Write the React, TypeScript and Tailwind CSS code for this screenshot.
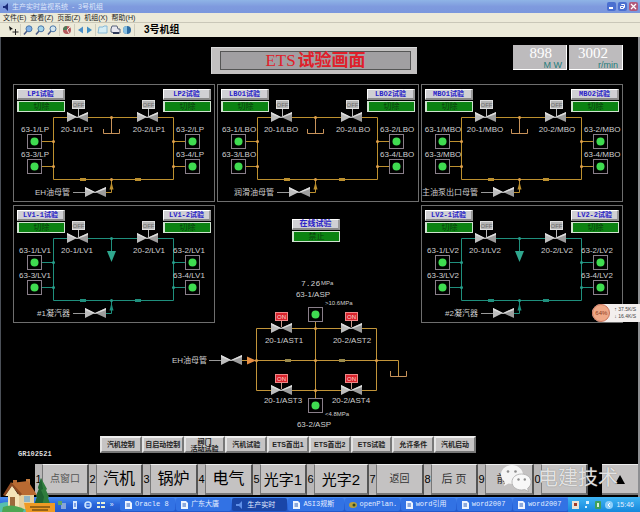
import React from "react";

type PanelSpec = {
  tag: string;
  valve: string;
  left: string;
  right: string;
  source: string;
  vacuum?: boolean;
};

const panels: PanelSpec[] = [
  { tag: "LP", valve: "LP1", left: "LP1", right: "LP2", source: "EH油母管" },
  { tag: "LBO", valve: "LBO", left: "LBO1", right: "LBO2", source: "润滑油母管" },
  { tag: "MBO", valve: "MBO", left: "MBO1", right: "MBO2", source: "主油泵出口母管" },
  { tag: "LV1", valve: "LV1", left: "LV1-1", right: "LV1-2", source: "#1凝汽器", vacuum: true },
  { tag: "LV2", valve: "LV2", left: "LV2-1", right: "LV2-2", source: "#2凝汽器", vacuum: true },
];

const menus = ["文件(E)", "查看(Z)", "页面(Z)", "机组(X)", "帮助(H)"];

const screens = ["汽机控制", "自启动控制", "阀门\n活动试验", "汽机试验", "ETS首出1", "ETS首出2", "ETS试验", "允许条件", "汽机启动"];

const windows = [
  { no: "1", text: "点窗口", look: "text-[10px] text-[#555]" },
  { no: "2", text: "汽机", look: "text-[16px]" },
  { no: "3", text: "锅炉", look: "text-[16px]" },
  { no: "4", text: "电气", look: "text-[16px]" },
  { no: "5", text: "光字1", look: "text-[15px]" },
  { no: "6", text: "光字2", look: "text-[15px]" },
  { no: "7", text: "返回", look: "text-[10px] text-[#333]" },
  { no: "8", text: "后 页", look: "text-[11px] text-[#333]" },
  { no: "9", text: "前 页", look: "text-[11px] text-[#333]" },
  { no: "0", text: "", look: "text-[11px]" },
];

const tasks = [
  { text: "Oracle 8", kind: "doc" },
  { text: "广东大唐", kind: "doc" },
  { text: "生产实时", kind: "app", active: true },
  { text: "ASI3规斯", kind: "doc" },
  { text: "openPlan.", kind: "plan" },
  { text: "word引用", kind: "doc" },
  { text: "word2007", kind: "doc" },
  { text: "word2007", kind: "doc" },
];

function Valve({ x, y }: { x: number; y: number }) {
  return (
    <g>
      <rect x={x - 10} y={y - 1} width="20" height="2" fill="#000" />
      <path d={`M${x - 10} ${y - 5}L${x} ${y}L${x - 10} ${y + 5}Z`} fill="#bdbdbd" />
      <path d={`M${x + 11} ${y - 5}L${x} ${y}L${x + 11} ${y + 5}Z`} fill="#9c9c9c" />
      <path d={`M${x - 10} ${y - 5}L${x} ${y}L${x + 11} ${y - 5}L${x + 11} ${y - 3}L${x} ${y + 1}L${x - 10} ${y - 3}Z`} fill="#dcdcdc" />
    </g>
  );
}

function Solenoid({ x, y, on }: { x: number; y: number; on?: boolean }) {
  return (
    <g>
      <path d={`M${x + 0.5} ${y - 9}V${y}`} stroke={on ? "#c99a8c" : "#bbb"} />
      <rect x={x - 5.5} y={y - 16.5} width="12" height="8" fill={on ? "#d8232c" : "#b4b4b4"} stroke={on ? "#e88" : "#dedede"} strokeWidth="1" />
      <text x={x + 0.5} y={y - 10} fontSize="6" textAnchor="middle" fill={on ? "#ffd9d9" : "#6b6b6b"}>
        {on ? "ON" : "OFF"}
      </text>
    </g>
  );
}

function Lamp({ x, y }: { x: number; y: number }) {
  return (
    <g>
      <rect x={x - 6.5} y={y - 6.5} width="14" height="14" fill="#000" stroke="#8a7f8a" />
      <circle cx={x + 0.5} cy={y + 0.5} r="4" fill="#3fdc50" />
    </g>
  );
}

function Joint({ x, y, fill }: { x: number; y: number; fill: string }) {
  return <circle cx={x + 0.5} cy={y + 0.5} r="1.5" fill={fill} />;
}

function TestControl({ title, state, big }: { title: string; state: string; big?: boolean }) {
  return (
    <div className="flex w-12 flex-col gap-px">
      <button
        className={
          "flex h-[11px] items-center justify-center whitespace-nowrap border-t border-l border-r-2 border-b-2 border-t-white border-l-white border-r-[#999] border-b-[#888] bg-[#d0d0d4] font-['Liberation_Mono','Noto_Sans_CJK_SC',monospace] leading-none font-bold text-[#2a22c8] " +
          (big ? "text-[8px]" : "text-[7px]")
        }
      >
        {title}
      </button>
      <button className="flex h-[11px] items-center justify-center border-t border-l-2 border-r border-b border-[#cfe3cf] bg-[#0b8212] text-[8px] leading-none text-[#0a3d0d]">
        {state}
      </button>
    </div>
  );
}

function Panel({ spec }: { spec: PanelSpec }) {
  const pipe = spec.vacuum ? "#1f8f7d" : "#bd902f";
  const node = spec.vacuum ? "#27a08c" : "#e0a04a";
  const rightLabel = spec.vacuum ? 160 : 163;
  return (
    <section className="grid h-[118px] outline outline-1 -outline-offset-1 outline-[#6e6e6e]">
      <svg viewBox="0 0 202 118" className="col-start-1 row-start-1 h-[118px] w-full" fill="none">
        <path d="M40.5 33.5H160.5V95.5H40.5Z" stroke={pipe} />
        <path d="M28 57.5H40M28 82.5H40M161 57.5H172M161 82.5H172" stroke={pipe} />
        <path d="M60 108.5H98.5V95" stroke={pipe} />
        <path d="M60 108.5H72" stroke="#999" />
        <path d="M96.5 105.5L98.5 98L100.5 105.5Z" fill={pipe} />
        <rect x="67" y="94" width="6" height="3" fill={pipe} />
        <rect x="122" y="94" width="6" height="3" fill={pipe} />
        {spec.vacuum ? (
          <g>
            <path d="M98.5 34V47" stroke={pipe} />
            <path d="M94 46H103L98.5 57Z" fill="#2fa78e" />
          </g>
        ) : (
          <path d="M98.5 34V49.5M90.5 45V49.5H106.5V45" stroke="#c8935a" />
        )}
        <Joint x={98} y={33} fill={node} />
        <Joint x={98} y={95} fill={node} />
        <Joint x={40} y={57} fill={node} />
        <Joint x={40} y={82} fill={node} />
        <Joint x={160} y={57} fill={node} />
        <Joint x={160} y={82} fill={node} />
        <Solenoid x={65} y={33} />
        <Solenoid x={135} y={33} />
        <Valve x={64} y={33} />
        <Valve x={134} y={33} />
        <Valve x={82} y={108} />
        <Lamp x={21} y={57} />
        <Lamp x={21} y={82} />
        <Lamp x={179} y={57} />
        <Lamp x={179} y={82} />
        <g fill="#cfcfcf" fontSize="8">
          <text x="22" y="48" textAnchor="middle">{`63-1/${spec.tag}`}</text>
          <text x="22" y="73" textAnchor="middle">{`63-3/${spec.tag}`}</text>
          <text x={rightLabel} y="48">{`63-2/${spec.tag}`}</text>
          <text x={rightLabel} y="73">{`63-4/${spec.tag}`}</text>
          <text x="64" y="48" textAnchor="middle">{`20-1/${spec.valve}`}</text>
          <text x="136" y="48" textAnchor="middle">{`20-2/${spec.valve}`}</text>
          <text x="57" y="111" textAnchor="end">{spec.source}</text>
        </g>
      </svg>
      <div className="col-start-1 row-start-1 flex items-start justify-between self-start px-1 pt-[5px]">
        <TestControl title={`${spec.left}试验`} state="切除" />
        <TestControl title={`${spec.right}试验`} state="切除" />
      </div>
    </section>
  );
}

function TripBlock() {
  return (
    <svg viewBox="170 275 299 155" className="pointer-events-none mx-auto -mt-12 h-[155px] w-[299px]" fill="none">
      <path d="M256.5 328.5H376.5V390.5H256.5ZM242 360.5H398.5V374.5M315.5 321V399" stroke="#c2953a" />
      <path d="M390.5 371V376.5H406.5V371M398.5 374V376.5" stroke="#c8935a" />
      <path d="M209 360.5H222" stroke="#999" />
      <path d="M247 356.5L256 360.5L247 364.5Z" fill="#e58f45" />
      <rect x="285" y="359" width="6" height="3" fill="#9a8a4c" />
      <rect x="339" y="359" width="6" height="3" fill="#9a8a4c" />
      <Joint x={256} y={360} fill="#e0a04a" />
      <Joint x={315} y={328} fill="#e0a04a" />
      <Joint x={315} y={360} fill="#e0a04a" />
      <Joint x={315} y={390} fill="#e0a04a" />
      <Joint x={376} y={360} fill="#e0a04a" />
      <Solenoid x={281} y={329} on />
      <Solenoid x={351} y={329} on />
      <Solenoid x={281} y={391} on />
      <Solenoid x={351} y={391} on />
      <Valve x={281} y={328} />
      <Valve x={351} y={328} />
      <Valve x={281} y={390} />
      <Valve x={351} y={390} />
      <Valve x={231} y={360} />
      <Lamp x={315} y={314} />
      <Lamp x={315} y={405} />
      <g fill="#cfcfcf" fontSize="8">
        <text x="172" y="363">EH油母管</text>
        <text x="284" y="343" textAnchor="middle">20-1/AST1</text>
        <text x="352" y="343" textAnchor="middle">20-2/AST2</text>
        <text x="283" y="403" textAnchor="middle">20-1/AST3</text>
        <text x="351" y="403" textAnchor="middle">20-2/AST4</text>
        <text x="313" y="297" textAnchor="middle">63-1/ASP</text>
        <text x="314" y="427" textAnchor="middle">63-2/ASP</text>
        <text x="301" y="286" fontFamily="Liberation Mono, monospace">7.26</text>
        <text x="321" y="285" fontSize="6">MPa</text>
        <text x="325" y="305" fontSize="6">&gt;10.6MPa</text>
        <text x="325" y="416" fontSize="6">&lt;4.8MPa</text>
      </g>
    </svg>
  );
}

function ToolButton({ label, slim, children }: { label: string; slim?: boolean; children: React.ReactNode }) {
  return (
    <button aria-label={label} className={"flex h-3 shrink-0 items-center justify-center " + (slim ? "w-[9px]" : "w-3")}>
      <svg viewBox="0 0 12 12" className="h-3 w-3 shrink-0" fill="none">
        {children}
      </svg>
    </button>
  );
}

function Lens({ tone }: { tone: string }) {
  return (
    <g>
      <path d="M5 7L2 10.5" stroke="#4c5c86" strokeWidth="1.6" />
      <circle cx="7" cy="4.8" r="3" fill={tone} stroke="#4a76a8" />
    </g>
  );
}

function Divider() {
  return <span className="mx-px h-3 w-px bg-[#cfcdbd]" />;
}

function TaskIcon({ kind }: { kind: string }) {
  return (
    <svg viewBox="0 0 8 8" className="h-2 w-2 shrink-0">
      {kind === "doc" && (
        <g>
          <path d="M1 0H6L8 2V8H1Z" fill="#eef4ff" />
          <path d="M2.5 3H6M2.5 5H6" stroke="#2c5fb8" />
        </g>
      )}
      {kind === "app" && <path d="M0 3H3L6 0V8L3 5H0Z" fill="#5f8fe8" />}
      {kind === "plan" && (
        <g>
          <ellipse cx="4" cy="4" rx="4" ry="3" fill="#b8a13c" />
          <circle cx="5" cy="4" r="1.5" fill="#344a1f" />
        </g>
      )}
    </svg>
  );
}

function House() {
  return (
    <svg viewBox="0 0 56 34" className="absolute bottom-0 left-0 h-[34px] w-14" aria-hidden="true">
      <ellipse cx="10" cy="32" rx="18" ry="8" fill="#57bfae" />
      <path d="M41 0L47 11L46 12L49 19L48 20L51 28H34L37 19L36 18L39 11L38 10Z" fill="#2f7d3c" />
      <path d="M41 0L43 11L41 12L44 19L42 28H34L37 19L36 18L39 11L38 10Z" fill="#1f6230" />
      <rect x="13" y="2" width="4" height="7" fill="#b56a35" />
      <rect x="26" y="1" width="4" height="6" fill="#c47a3d" />
      <path d="M8 16H34V31H8Z" fill="#e6cf9d" />
      <path d="M5 18L12 7L19 18V31H8V18Z" fill="#f4e3b8" />
      <path d="M11 5L28 3L37 17H21Z" fill="#b96a32" />
      <path d="M11 4L3 17L5 18L12 8L20 18L22 16Z" fill="#8e4a22" />
      <rect x="10" y="19" width="5" height="9" fill="#9c6a3c" />
      <rect x="24" y="18" width="6" height="6" fill="#8fb3c4" />
      <path d="M24 25H55V34H26Z" fill="#ef9a24" />
      <path d="M30 29H50M32 32H48" stroke="#7c5210" strokeWidth="1.5" />
      <path d="M3 29Q12 25 24 31L23 34H2Z" fill="#4da652" />
    </svg>
  );
}

function ChatBubbles() {
  return (
    <svg viewBox="0 0 32 28" className="h-7 w-8" aria-hidden="true">
      <path d="M12 1C5.500 1 1 5.500 1 10.500C1 13.500 2.500 16 5 18L4 22L8.500 19.500C9.700 19.800 11 20 12 20C18 20 23 16 23 10.500C23 5.500 18 1 12 1Z" fill="#f4f4f4" />
      <path d="M21.500 10C16 10 12 13.500 12 18C12 22.500 16 26 21.500 26C22.500 26 23.600 25.800 24.600 25.500L28.500 27.500L27.600 24.300C29.800 22.800 31 20.600 31 18C31 13.500 27 10 21.500 10Z" fill="#f8f8f8" stroke="#a9a9a9" strokeWidth="0.8" />
      <circle cx="8" cy="7.500" r="1.300" fill="#8c8c8c" />
      <circle cx="15.500" cy="7.500" r="1.300" fill="#8c8c8c" />
      <circle cx="18.500" cy="15.500" r="1.200" fill="#8c8c8c" />
      <circle cx="24.800" cy="15.500" r="1.200" fill="#8c8c8c" />
    </svg>
  );
}

function Readout({ value, unit }: { value: string; unit: string }) {
  return (
    <div className="flex h-[25px] w-[54px] flex-col border-r border-b border-white bg-[#bdbbbd] pr-1">
      <span className="pr-2.5 font-['Liberation_Serif',serif] text-[15px] leading-[16px] text-white">{value}</span>
      <span className="text-[9px] leading-[8px] text-[#1d7b7b]">{unit}</span>
    </div>
  );
}

export default function App() {
  return (
    <div className="relative flex min-h-screen flex-col overflow-hidden bg-black font-['Liberation_Sans','Noto_Sans_CJK_SC',sans-serif] leading-none">
      <header className="flex h-[13px] items-center gap-0.5 bg-linear-to-b from-[#8fb4e6] via-[#7f9ade] to-[#7a97dd] px-0.5">
        <svg viewBox="0 0 8 8" className="h-2 w-2">
          <path d="M1 3H3L6 0V8L3 5H1Z" fill="#1a2c7a" />
        </svg>
        <h1 className="flex-1 text-[7px] whitespace-pre text-[#dfe8fb]">生产实时监视系统  -  3号机组</h1>
        <button aria-label="最小化" className="flex h-[9px] w-[9px] items-end rounded-xs bg-[#4a6fd0] p-0.5">
          <span className="h-0.5 w-1 bg-white" />
        </button>
        <button aria-label="还原" className="flex h-[9px] w-[9px] items-center justify-center rounded-xs bg-[#4a6fd0]">
          <svg viewBox="0 0 7 7" className="h-[7px] w-[7px]" fill="none" stroke="#fff">
            <path d="M2.500 2V1.500H5.500V4.500H5M1.500 3.500H4.500V5.500H1.500Z" />
          </svg>
        </button>
        <button aria-label="关闭" className="flex h-[9px] w-[9px] items-center justify-center rounded-xs bg-[#b0587c]">
          <svg viewBox="0 0 7 7" className="h-[7px] w-[7px]" stroke="#fff" strokeWidth="1.3">
            <path d="M1 1L6 6M6 1L1 6" />
          </svg>
        </button>
      </header>

      <nav className="flex h-[10px] items-center gap-1 border-b border-[#c9c7b8] bg-[#ecead9] px-[3px] text-[7px] text-[#222]">
        {menus.map((m) => (
          <button key={m} className="whitespace-nowrap">{m}</button>
        ))}
      </nav>

      <div className="flex h-[14px] items-center bg-[#ecead9] pl-[7px]">
        <ToolButton label="选择">
          <path d="M2 2L6 5L4 5.500L3 7Z" fill="#111" />
          <path d="M8.500 5V11M5.500 8H11.500" stroke="#222" />
        </ToolButton>
        <Divider />
        <ToolButton label="放大"><Lens tone="#7fb0e8" /></ToolButton>
        <ToolButton label="缩小"><Lens tone="#a5d6ea" /></ToolButton>
        <ToolButton label="还原比例"><Lens tone="#d5e6ee" /></ToolButton>
        <Divider />
        <ToolButton label="时钟">
          <circle cx="6" cy="6" r="4" fill="#b5595c" />
          <path d="M6 2A4 4 0 0 0 2 6L6 6Z" fill="#4d7a56" />
          <path d="M6 6L9 3M6 6L8 9" stroke="#f3e3e0" />
        </ToolButton>
        <Divider />
        <ToolButton label="后退" slim><path d="M8 2.500V9.500L3 6Z" fill="#4b8fc9" /></ToolButton>
        <ToolButton label="前进" slim><path d="M3 2.500V9.500L8 6Z" fill="#3f8fc4" /></ToolButton>
        <Divider />
        <ToolButton label="打开"><path d="M2 3H6L7 2H10V9H1Z" fill="#d5edf5" stroke="#86b8d6" /></ToolButton>
        <ToolButton label="打印">
          <path d="M3 2H8L9 5H11V9H6L2 8V5Z" fill="#e6e6ee" stroke="#57627c" />
          <path d="M4 9H10" stroke="#2f3a58" strokeWidth="2" />
        </ToolButton>
        <ToolButton label="帮助">
          <circle cx="6" cy="6" r="4" fill="#2c6aa0" />
          <path d="M6 2A4 4 0 0 0 6 10Z" fill="#86bfe0" />
        </ToolButton>
        <Divider />
        <strong className="ml-2 text-[10px] text-black">3号机组</strong>
      </div>

      <main className="relative flex-1 border-r-2 border-l border-r-[#8d8f92] border-l-[#4b5058] pt-2">
        <div className="flex items-start pr-[15px] pl-1">
          <div className="flex-1" />
          <div className="mt-0.5 h-[27px] w-[206px] border-t border-l border-[#d8d8d8] bg-[#c2c0c0] pt-[3px] pr-[6px] pb-1 pl-2">
            <h2 className="flex h-[19px] items-center justify-center gap-0.5 border border-[#555] bg-[#a19fa2] font-['Liberation_Serif','Noto_Sans_CJK_SC',serif] text-[17px] leading-none whitespace-nowrap text-[#e0202a]">
              ETS<b>试验画面</b>
            </h2>
          </div>
          <div className="flex flex-1 justify-end gap-0.5 text-right">
            <Readout value="898" unit="M W" />
            <Readout value="3002" unit="r/min" />
          </div>
        </div>

        <div className="grid grid-cols-3 gap-x-0.5 gap-y-[3px] pt-2.5 pr-[15px] pl-3">
          {panels.slice(0, 4).map((p) => (
            <Panel key={p.tag} spec={p} />
          ))}
          <div className="flex justify-center pt-[14px] pr-1">
            <TestControl title="在线试验" state="禁止" big />
          </div>
          <Panel spec={panels[4]} />
        </div>

        <TripBlock />

        <div className="flex h-7 items-start pt-1.5">
          <span className="w-[99px] self-end pl-[17px] font-['Liberation_Mono',monospace] text-[7px] font-bold text-[#ddd]">GR102521</span>
          <div className="grid w-[376px] grid-cols-9">
            {screens.map((s) => (
              <button
                key={s}
                className="flex h-[17px] items-center justify-center border-2 border-t-[#eee] border-r-[#777] border-b-[#777] border-l-[#e4e4e4] bg-[#c6c4c4] text-center text-[7px] leading-[7px] font-bold whitespace-pre text-[#222]"
              >
                {s}
              </button>
            ))}
          </div>
        </div>

        <div className="relative mt-1.5 mb-0.5 grid h-[31px] grid-cols-[54fr_54fr_55fr_55fr_54fr_62fr_55fr_54fr_56fr_54fr_14fr_36fr] pl-[34px]">
          {windows.map((w) => (
            <button key={w.no} className="flex text-black">
              <span className="flex h-full w-[7px] items-center justify-center bg-[#b9b7b7] text-[11px]">{w.no}</span>
              <span
                className={
                  "flex h-full flex-1 items-center justify-center border-t border-r-2 border-b-2 border-l border-t-[#eee] border-r-[#555] border-b-[#777] border-l-[#777] bg-[#c4c2c2] whitespace-nowrap " +
                  w.look
                }
              >
                {w.text}
              </span>
            </button>
          ))}
          <span />
          <button aria-label="上移" className="flex items-center justify-center border-t border-b-2 border-t-[#eee] border-b-[#777] bg-[#c4c2c2]">
            <svg viewBox="0 0 10 9" className="h-[9px] w-2.5">
              <path d="M5 0L10 9H0Z" fill="#000" />
            </svg>
          </button>
          <div className="pointer-events-none absolute top-0 right-5 flex items-center gap-1.5">
            <ChatBubbles />
            <span className="text-[20px] leading-[28px] text-white/80 [text-shadow:0_0_1px_#666]">电建技术</span>
          </div>
        </div>

        <aside className="absolute top-[267px] -right-0.5 flex h-[18px] items-center gap-1 rounded-l-full bg-[#f3efee] pr-1">
          <span className="flex h-[18px] w-[18px] items-center justify-center rounded-full border border-[#c9735a] bg-[#f0a988] text-[6px] text-[#8a3a22]">64%</span>
          <span className="flex flex-col gap-0.5 text-[5px] text-[#444]">
            <span>↑ 37.5K/S</span>
            <span>↓ 16.4K/S</span>
          </span>
        </aside>
      </main>

      <footer className="flex h-[15px] items-center bg-linear-to-b from-[#4a8df0] via-[#2a66dc] to-[#2358c8] pl-14 text-[7px] text-[#e4eeff]">
        <div className="flex w-16 items-center justify-around pr-1">
          <svg viewBox="0 0 8 8" className="h-2 w-2"><path d="M0 0H4V4H0Z" fill="#5ea36a" /><path d="M4 2H8V8H3V4H4Z" fill="#86a5d8" /></svg>
          <svg viewBox="0 0 8 8" className="h-2 w-2"><path d="M2 0H6V8H2Z" fill="#d9e8ff" /><path d="M3 3H5M3 5H5" stroke="#2358c8" /></svg>
          <svg viewBox="0 0 8 8" className="h-2 w-2"><circle cx="4" cy="4" r="3" fill="none" stroke="#cfe6ff" strokeWidth="1.5" /><path d="M1 4H7" stroke="#cfe6ff" /></svg>
          <svg viewBox="0 0 8 8" className="h-2 w-2"><path d="M0 1H3V3H0ZM4 1H8V3H4ZM0 5H3V7H0ZM4 5H8V7H4Z" fill="#e8f0d8" /></svg>
          <span>»</span>
        </div>
        <div className="grid flex-1 grid-cols-8 gap-px">
          {tasks.map((t, i) => (
            <button
              key={i}
              className={
                "flex h-[13px] items-center gap-[3px] overflow-hidden rounded-xs pl-1 whitespace-nowrap " +
                (t.active ? "bg-[#1a46a8]" : "bg-[#3272e4]")
              }
            >
              <TaskIcon kind={t.kind} />
              <span className={t.kind === "app" ? "" : "font-['Liberation_Mono','Noto_Sans_CJK_SC',monospace]"}>{t.text}</span>
            </button>
          ))}
        </div>
        <div className="flex h-full w-[72px] items-center justify-between bg-linear-to-b from-[#3fb4f4] to-[#1488dc] pr-1.5 pl-1">
          <svg viewBox="0 0 8 8" className="h-2 w-2"><rect width="7" height="8" fill="#e9e4d8" /><path d="M2 2H5V5H2Z" fill="#a23b2a" /></svg>
          <svg viewBox="0 0 8 8" className="h-2 w-2"><path d="M3 0H6V3H3ZM2 5H4V7H2Z" fill="#d8f0ff" /></svg>
          <svg viewBox="0 0 8 8" className="h-2 w-2"><rect x="1" width="6" height="8" rx="1" fill="#3fa05a" /><path d="M3 2H5V6H3Z" fill="#d7f0d7" /></svg>
          <svg viewBox="0 0 8 8" className="h-2 w-2"><circle cx="4" cy="4" r="4" fill="#8fd0fa" /><path d="M5 2L3 4L5 6" fill="none" stroke="#fff" /></svg>
          <time className="text-[7px]">15:46</time>
        </div>
      </footer>
      <House />
    </div>
  );
}
